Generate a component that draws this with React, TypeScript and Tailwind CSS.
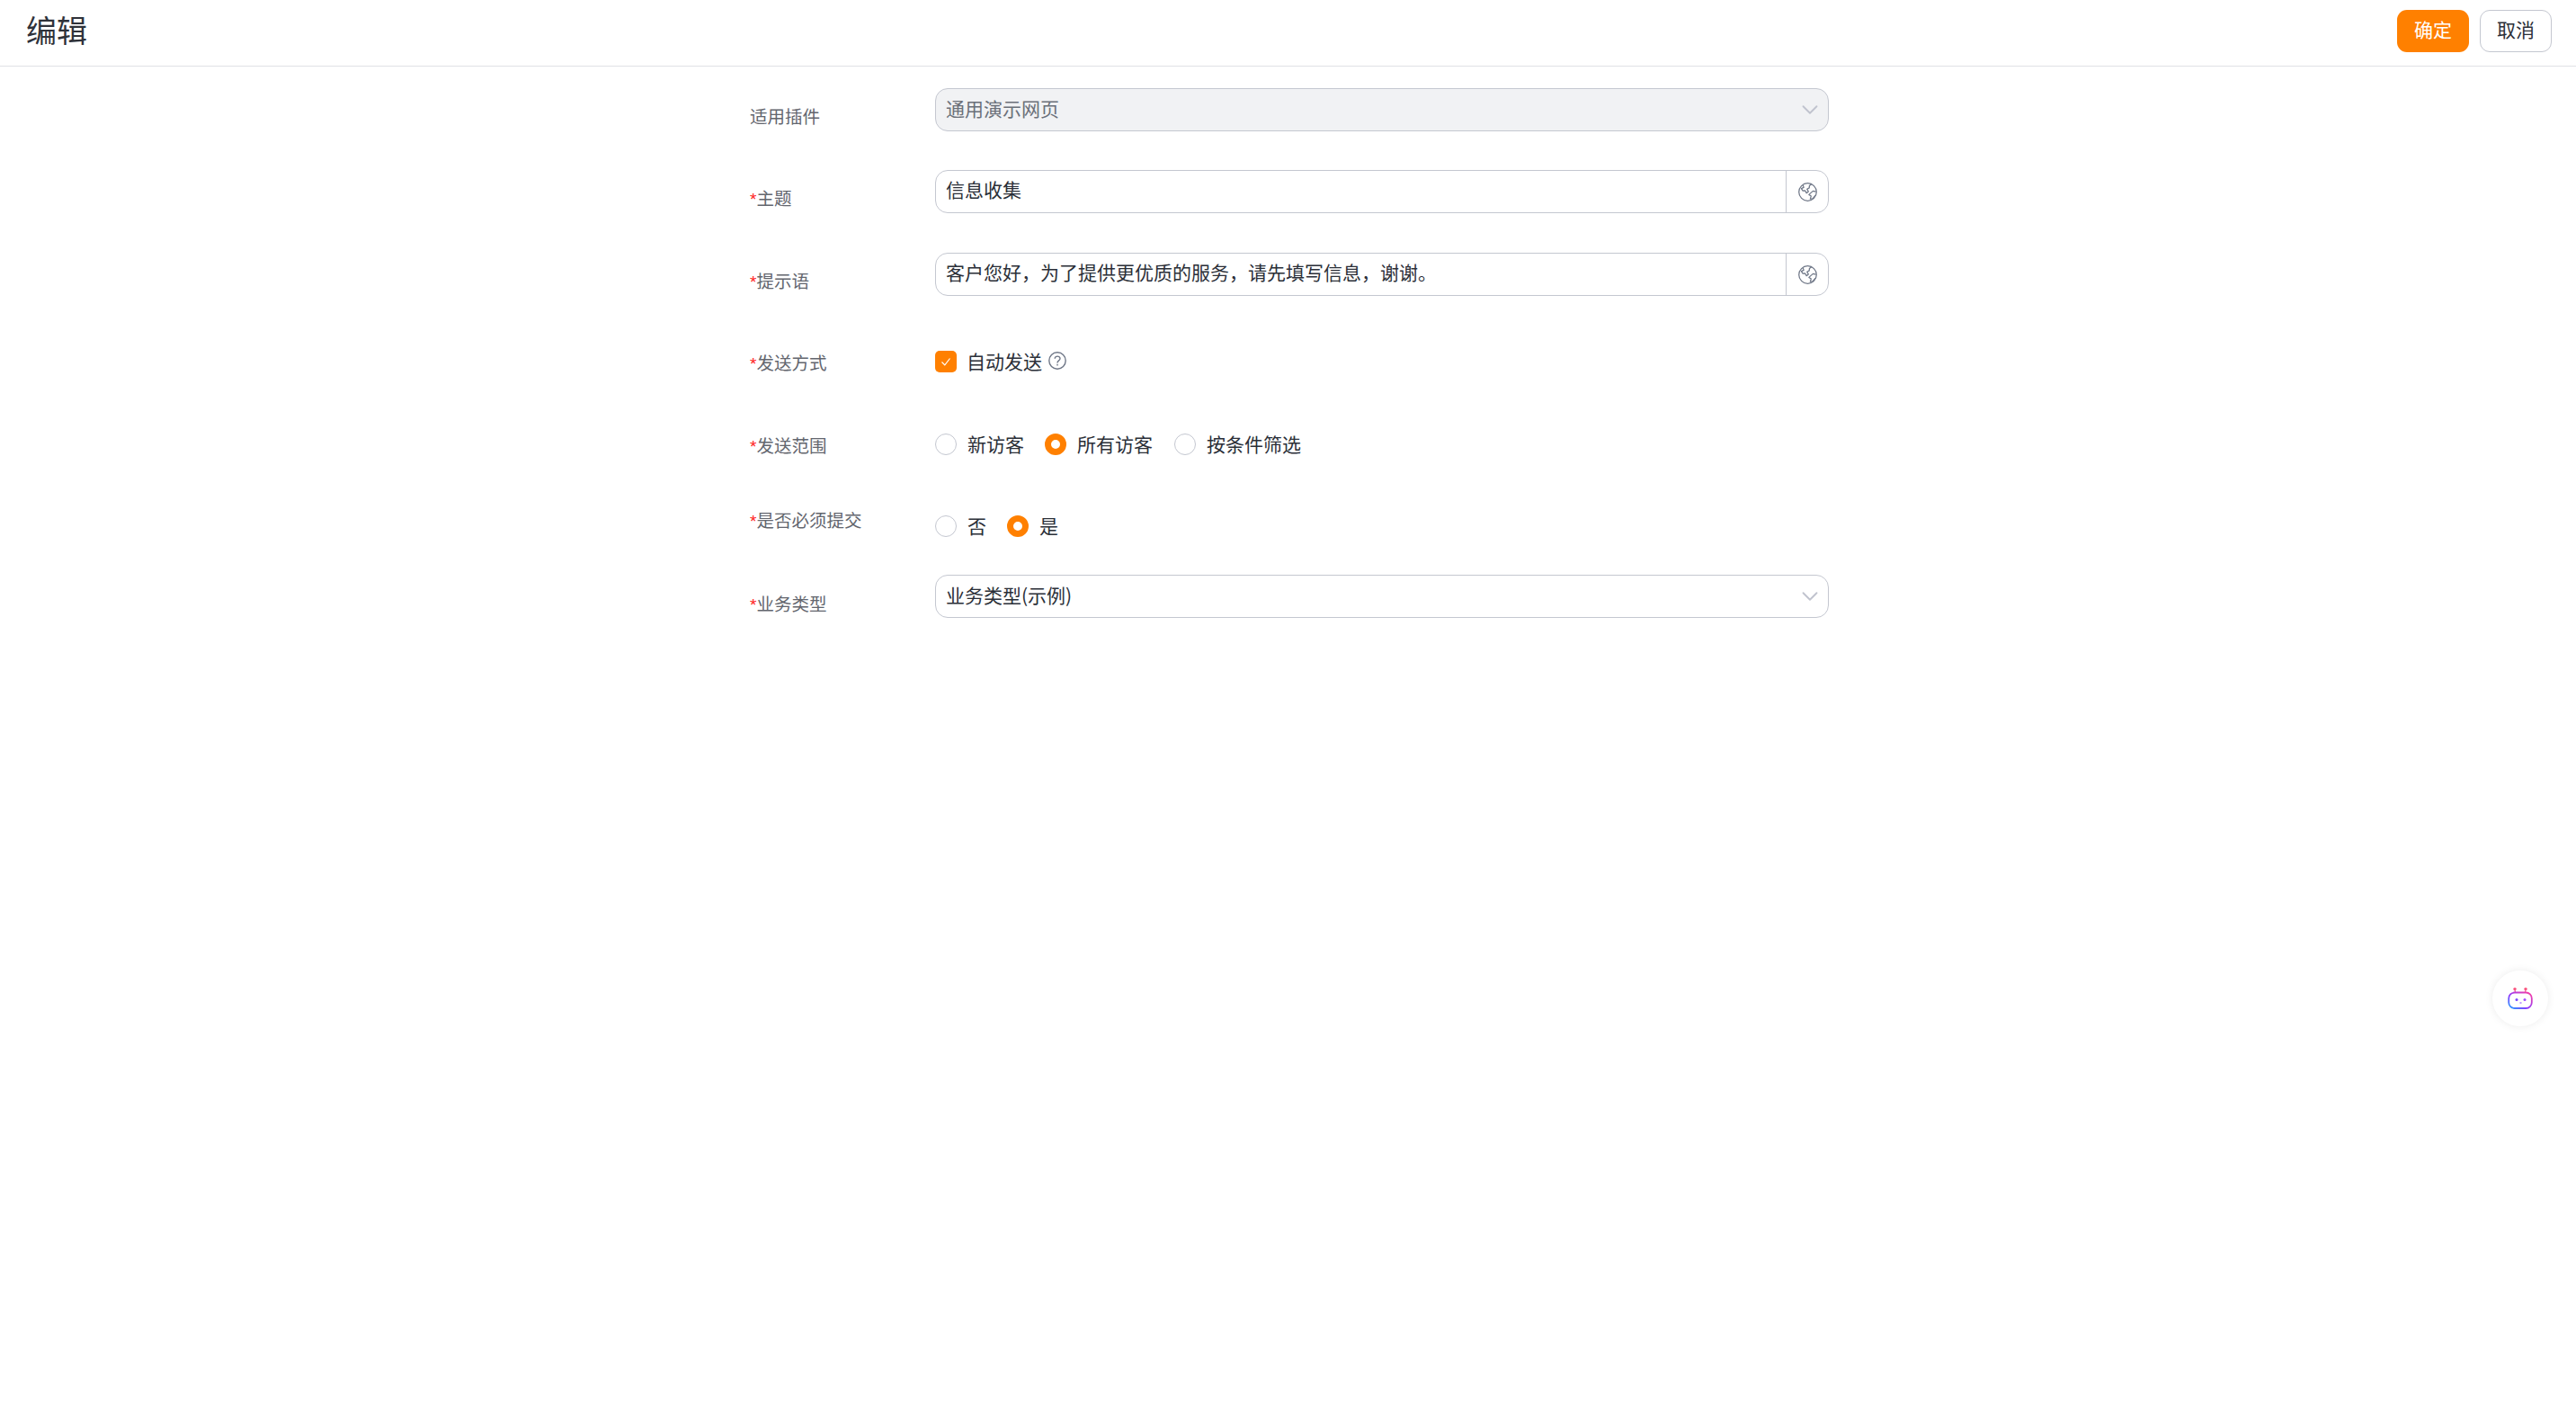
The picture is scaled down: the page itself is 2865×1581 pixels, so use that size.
import { ChevronDown } from "lucide-react";

const Label = ({ text, required = true, offset = "mt-[16px]" }: { text: string; required?: boolean; offset?: string }) => (
  <div className={`w-[206px] shrink-0 text-[19.5px] leading-[30px] text-[#63666e] ${offset}`}>
    {required && <span className="font-['Liberation_Sans'] text-[19px] text-[#ff2020]">*</span>}
    {text}
  </div>
);

const Globe = () => (
  <svg width="23" height="23" viewBox="0 0 24 24" fill="none" stroke="#6f7787" strokeWidth="1.3" strokeLinejoin="round">
    <circle cx="12" cy="12" r="10.2" />
    <path d="M6.6 4 L7.4 6.6 L4.6 8 L6.4 10.6 L9 10.4 L10.6 13.2 L12.8 11.4 L11.2 8.6 L13.8 7.2 L14 4.8 L16.4 2.8" />
    <path d="M21.6 11.6 L18.2 10.8 L15.4 13.2 L13.4 15 L16 16.6 L15 20 L17.8 19.6 L21 15.8" />
  </svg>
);

const Radio = ({ checked, text, className = "" }: { checked?: boolean; text: string; className?: string }) => (
  <label className={`flex items-center ${className}`}>
    {checked ? (
      <span className="h-[24px] w-[24px] shrink-0 rounded-full border-[7px] border-[#ff8000] bg-white" />
    ) : (
      <span className="h-[24px] w-[24px] shrink-0 rounded-full border border-[#c4c7d0] bg-white" />
    )}
    <span className="mb-[3px] ml-[12px] text-[21px] leading-[24px] text-[#2b2f38]">{text}</span>
  </label>
);

const TextRow = ({ value }: { value: string }) => (
  <div className="flex h-[48px] w-[994px] items-stretch rounded-[14px] border border-[#c4c7d0] bg-white">
    <div className="flex-1 pb-[3px] pl-[11px] text-[21px] leading-[41px] text-[#2b2f38]">{value}</div>
    <div className="flex w-[47px] items-center justify-center border-l border-[#c4c7d0]">
      <Globe />
    </div>
  </div>
);

const Select = ({ value, disabled }: { value: string; disabled?: boolean }) => (
  <div
    className={`flex h-[48px] w-[994px] items-center justify-between rounded-[14px] border border-[#c4c7d0] pl-[11px] pr-[5px] text-[21px] ${
      disabled ? "bg-[#f1f2f4] text-[#6b7079]" : "bg-white text-[#2b2f38]"
    }`}
  >
    <span className="mb-[3px]">{value}</span>
    <ChevronDown className="h-[30px] w-[30px] text-[#c0c3ce]" strokeWidth={1.5} />
  </div>
);

export default function App() {
  return (
    <div
      className="relative min-h-screen bg-white"
      style={{ fontFamily: '"Noto Sans CJK SC", "Liberation Sans", sans-serif' }}
    >
      <header className="flex h-[74px] items-center justify-between border-b border-[#e0e1e5] pb-[4px] pl-[29px] pr-[27px]">
        <h1 className="mb-[3px] text-[34px] font-normal leading-none text-[#2f323a]">编辑</h1>
        <div className="flex gap-[12px]">
          <button className="h-[47px] w-[80px] rounded-[11px] bg-[#ff8000] pb-[3px] text-[21px] text-white">确定</button>
          <button className="h-[47px] w-[80px] rounded-[11px] border border-[#c4c7d0] bg-white pb-[3px] text-[21px] text-[#2b2f38]">
            取消
          </button>
        </div>
      </header>

      <main className="ml-[834px] w-[1200px] pt-[24px]">
        <div className="flex h-[91px]">
          <Label text="适用插件" required={false} />
          <Select value="通用演示网页" disabled />
        </div>
        <div className="flex h-[92px]">
          <Label text="主题" />
          <TextRow value="信息收集" />
        </div>
        <div className="flex h-[92px]">
          <Label text="提示语" />
          <TextRow value="客户您好，为了提供更优质的服务，请先填写信息，谢谢。" />
        </div>
        <div className="flex h-[92px]">
          <Label text="发送方式" offset="mt-[15px]" />
          <div className="mt-[17px] flex h-[24px] items-center">
            <span className="flex h-[24px] w-[24px] items-center justify-center rounded-[5px] bg-[#ff8000]">
              <svg width="14" height="14" viewBox="0 0 14 14" fill="none" stroke="#fff" strokeWidth="1.2">
                <path d="M2.5 7.5 L5.8 10.8 L11.5 3.5" />
              </svg>
            </span>
            <span className="mb-[3px] ml-[11px] text-[21px] leading-[24px] text-[#2b2f38]">自动发送</span>
            <svg className="mb-[3px] ml-[7px]" width="20" height="20" viewBox="0 0 20 20" fill="none" stroke="#6f7787" strokeWidth="1.4">
              <circle cx="10" cy="10" r="9.2" />
              <path d="M7.2 7.8 C7.2 4.2 13 4.2 13 7.8 C13 10 10 9.8 10 12.4" />
              <path d="M10 13.8 L10 15.4" />
            </svg>
          </div>
        </div>
        <div className="flex h-[91px]">
          <Label text="发送范围" offset="mt-[15px]" />
          <div className="mt-[17px] flex h-[24px]">
            <Radio text="新访客" />
            <Radio checked text="所有访客" className="ml-[23px]" />
            <Radio text="按条件筛选" className="ml-[24px]" />
          </div>
        </div>
        <div className="flex h-[83px]">
          <Label text="是否必须提交" offset="mt-[7px]" />
          <div className="mt-[17px] flex h-[24px]">
            <Radio text="否" />
            <Radio checked text="是" className="ml-[23px]" />
          </div>
        </div>
        <div className="flex">
          <Label text="业务类型" offset="mt-[17px]" />
          <Select value="业务类型(示例)" />
        </div>
      </main>

      <div className="absolute left-[2772px] top-[1079px] flex h-[62px] w-[62px] items-center justify-center rounded-full bg-white shadow-[0_0_10px_rgba(0,0,0,0.08)]">
        <svg width="30" height="26" viewBox="0 0 30 26" fill="none">
          <defs>
            <linearGradient id="bot" x1="0" y1="1" x2="1" y2="0">
              <stop offset="0" stopColor="#1fa2ff" />
              <stop offset="0.4" stopColor="#8a3cff" />
              <stop offset="1" stopColor="#ff3fa0" />
            </linearGradient>
          </defs>
          <path d="M9.5 7 L9 3 M20.5 7 L21 3" stroke="#f0608a" strokeWidth="1.2" />
          <circle cx="9" cy="2.6" r="1.7" fill="#f9557f" />
          <circle cx="21" cy="2.6" r="1.7" fill="#f9557f" />
          <rect x="2.2" y="6.5" width="25.6" height="17.5" rx="6.5" stroke="url(#bot)" strokeWidth="1.8" />
          <circle cx="11" cy="14.5" r="1.5" fill="#7a45ff" />
          <circle cx="20" cy="14.5" r="1.5" fill="#a04dff" />
          <path d="M14.5 18 H16.5" stroke="#8a4dff" strokeWidth="1.1" />
        </svg>
      </div>
    </div>
  );
}
